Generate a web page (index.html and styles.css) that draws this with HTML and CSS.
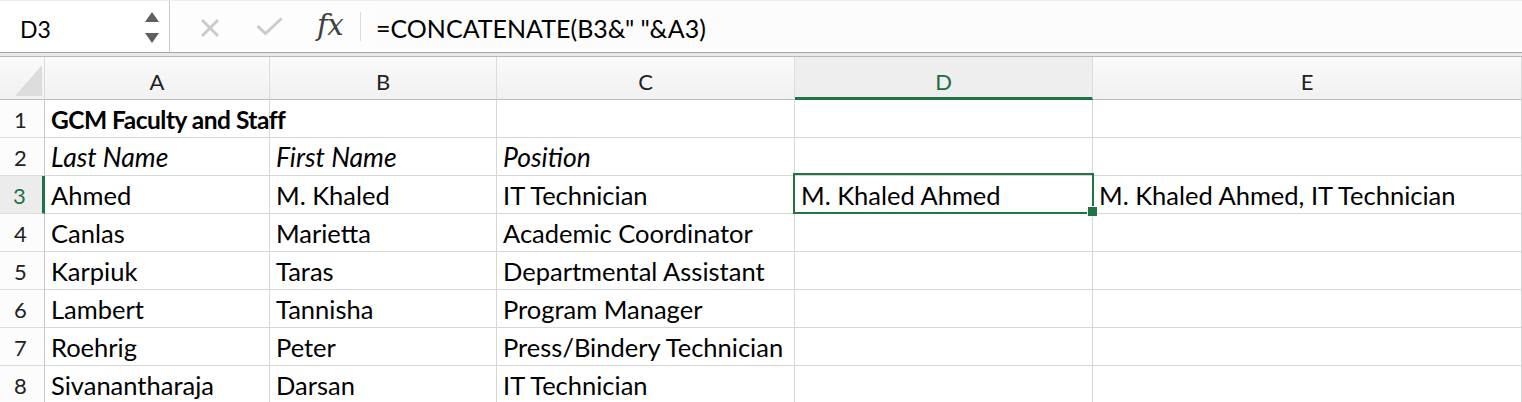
FILE: index.html
```html
<!DOCTYPE html>
<html lang="en">
<head>
    <meta charset="UTF-8">
    <title>GCM Faculty and Staff</title>
    <link rel="stylesheet" href="styles.css">
</head>
<body>
    <div class="formula-bar">
        <div class="name-box">
            <span class="cell-ref">D3</span>
            <div class="spinner">
                <svg width="14" height="10" viewBox="0 0 14 10"><path d="M7 0 L14 10 L0 10 Z" fill="#5f5f5f"/></svg>
                <svg width="14" height="10" viewBox="0 0 14 10"><path d="M0 0 L14 0 L7 10 Z" fill="#5f5f5f"/></svg>
            </div>
        </div>
        <div class="edit-tools">
            <svg class="tool cancel" width="20" height="20" viewBox="0 0 20 20"><path d="M2 2 L18 18 M18 2 L2 18" stroke="#cbcbcb" stroke-width="3"/></svg>
            <svg class="tool enter" width="27" height="19" viewBox="0 0 27 19"><path d="M1.5 9 L9.5 16.5 L25.5 1.5" fill="none" stroke="#cbcbcb" stroke-width="3"/></svg>
            <span class="fx">fx</span>
            <span class="divider"></span>
        </div>
        <div class="formula">=CONCATENATE(B3&amp;" "&amp;A3)</div>
    </div>
    <div class="split"></div>

    <div class="sheet">
        <!-- column headers -->
        <div class="corner"><span class="corner-tri"></span></div>
        <div class="col-head">A</div>
        <div class="col-head">B</div>
        <div class="col-head">C</div>
        <div class="col-head active">D</div>
        <div class="col-head">E</div>

        <div class="row-head">1</div>
        <div class="cell bold">GCM Faculty and Staff</div>
        <div class="cell"></div>
        <div class="cell"></div>
        <div class="cell"></div>
        <div class="cell"></div>

        <div class="row-head">2</div>
        <div class="cell italic">Last Name</div>
        <div class="cell italic">First Name</div>
        <div class="cell italic">Position</div>
        <div class="cell"></div>
        <div class="cell"></div>

        <div class="row-head active">3</div>
        <div class="cell">Ahmed</div>
        <div class="cell">M. Khaled</div>
        <div class="cell">IT Technician</div>
        <div class="cell selected">M. Khaled Ahmed<span class="fill-handle"></span></div>
        <div class="cell">M. Khaled Ahmed, IT Technician</div>

        <div class="row-head">4</div>
        <div class="cell">Canlas</div>
        <div class="cell">Marietta</div>
        <div class="cell">Academic Coordinator</div>
        <div class="cell"></div>
        <div class="cell"></div>

        <div class="row-head">5</div>
        <div class="cell">Karpiuk</div>
        <div class="cell">Taras</div>
        <div class="cell">Departmental Assistant</div>
        <div class="cell"></div>
        <div class="cell"></div>

        <div class="row-head">6</div>
        <div class="cell">Lambert</div>
        <div class="cell">Tannisha</div>
        <div class="cell">Program Manager</div>
        <div class="cell"></div>
        <div class="cell"></div>

        <div class="row-head">7</div>
        <div class="cell">Roehrig</div>
        <div class="cell">Peter</div>
        <div class="cell">Press/Bindery Technician</div>
        <div class="cell"></div>
        <div class="cell"></div>

        <div class="row-head">8</div>
        <div class="cell">Sivanantharaja</div>
        <div class="cell">Darsan</div>
        <div class="cell">IT Technician</div>
        <div class="cell"></div>
        <div class="cell"></div>
    </div>
</body>
</html>
```

FILE: styles.css
```css
* {
    margin: 0;
    padding: 0;
    box-sizing: border-box;
}

body {
    font-family: 'Lato', 'Liberation Sans', sans-serif;
    background: white;
    color: #000;
    height: 100vh;
    overflow: hidden;
}

/* formula bar */
.formula-bar {
    display: flex;
    height: 53px;
    background: #fdfdfd;
    border-top: 1px solid #ececec;
    border-bottom: 1px solid #a3a3a3;
}

.name-box {
    width: 170px;
    flex-shrink: 0;
    display: flex;
    align-items: center;
    justify-content: space-between;
    padding: 0 10px 0 20px;
    background: white;
    border-right: 1px solid #c9c9c9;
}

.cell-ref {
    font-size: 23px;
    padding-top: 4px;
}

.spinner {
    display: flex;
    flex-direction: column;
    gap: 11px;
    padding-top: 2px;
}

.edit-tools {
    display: flex;
    align-items: center;
    flex-shrink: 0;
    width: 205px;
    padding-left: 30px;
}

.cancel {
    margin: 3px 36px 0 0;
}

.enter {
    margin: 0 34px 0 0;
}

.fx {
    width: 43px;
    flex-shrink: 0;
    font-family: 'DejaVu Serif', 'Liberation Serif', serif;
    font-style: italic;
    font-size: 29px;
    color: #3f3f3f;
    letter-spacing: -0.5px;
    padding-bottom: 4px;
}

.divider {
    width: 1px;
    height: 29px;
    background: #dadada;
}

.formula {
    flex: 1;
    display: flex;
    align-items: center;
    padding: 3px 0 0 1px;
    font-size: 25px;
    background: #fcfcfc;
}

.split {
    height: 4px;
    background: #e9e9e9;
    border-bottom: 1px solid #b7b7b7;
}

/* grid */
.sheet {
    display: grid;
    grid-template-columns: 45px 225px 227px 298px 298px 1fr;
    grid-template-rows: 43px;
    grid-auto-rows: 38px;
}

.corner,
.col-head {
    background: linear-gradient(#fafafa, #f1f1f1);
    border-right: 1px solid #dcdcdc;
    border-bottom: 1px solid #bdbdbd;
}

.corner {
    display: flex;
    align-items: flex-end;
    justify-content: flex-end;
    padding: 0 2px 3px 0;
}

.corner-tri {
    width: 0;
    height: 0;
    border-left: 27px solid transparent;
    border-bottom: 31px solid #dcdcdc;
}

.col-head {
    display: flex;
    align-items: center;
    justify-content: center;
    padding-top: 6px;
    font-size: 22px;
    color: #222;
}

.col-head.active {
    background: #eeeeee;
    color: #1f6b3f;
    border-bottom: 3px solid #217346;
    padding-top: 8px;
}

.row-head {
    display: flex;
    align-items: center;
    justify-content: center;
    padding: 2px 3px 0 0;
    font-size: 22px;
    color: #222;
    background: #fcfcfc;
    border-right: 1px solid #c8c8c8;
    border-bottom: 1px solid #dcdcdc;
}

.row-head.active {
    background: #ececec;
    color: #217346;
    border-right: 3px solid #217346;
}

.cell {
    display: flex;
    align-items: center;
    padding: 1px 6px 0;
    font-size: 25.5px;
    white-space: nowrap;
    border-right: 1px solid #d6d6d6;
    border-bottom: 1px solid #d6d6d6;
}

.bold {
    font-weight: 700;
    font-size: 24.5px;
    letter-spacing: -0.5px;
}

.italic {
    font-style: italic;
    font-size: 26.5px;
}

/* active cell outline */
.selected {
    position: relative;
}

.selected::after {
    content: '';
    position: absolute;
    left: -2px;
    right: -2px;
    top: -3px;
    bottom: -1px;
    border: 2px solid #217346;
    pointer-events: none;
}

.fill-handle {
    position: absolute;
    right: -6px;
    bottom: -4px;
    width: 11px;
    height: 11px;
    background: #217346;
    border: 1px solid white;
    z-index: 1;
}
```
